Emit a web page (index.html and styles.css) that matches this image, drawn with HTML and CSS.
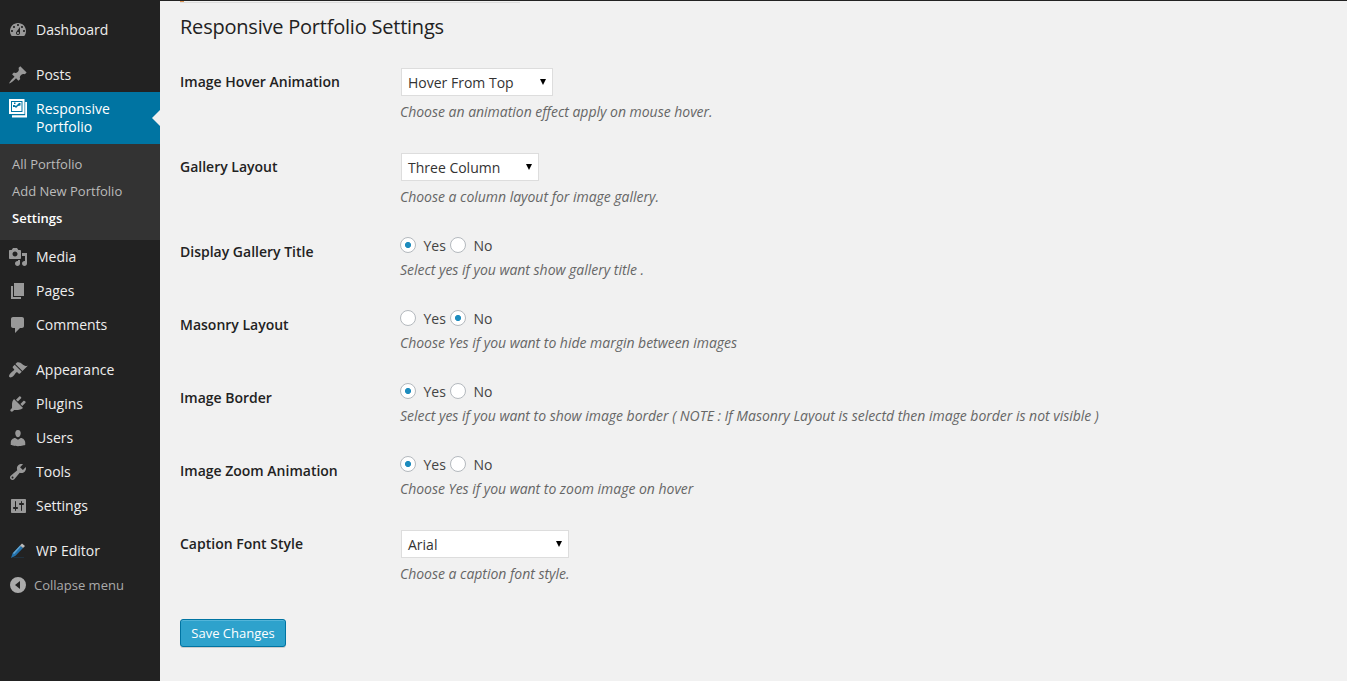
FILE: index.html
```html
<!DOCTYPE html>
<html lang="en">
<head>
<meta charset="utf-8">
<title>Responsive Portfolio Settings</title>
<link rel="stylesheet" href="styles.css">
</head>
<body>
<div class="admin">
  <nav class="menu">
    <a class="item"><svg class="icon" viewBox="0 0 20 20"><path d="M3.76 16h12.48c1.1-1.37 1.76-3.11 1.76-5 0-4.42-3.58-8-8-8s-8 3.58-8 8c0 1.89.66 3.63 1.76 5zM10 4c.55 0 1 .45 1 1s-.45 1-1 1-1-.45-1-1 .45-1 1-1zM6 6c.55 0 1 .45 1 1s-.45 1-1 1-1-.45-1-1 .45-1 1-1zm8 0c.55 0 1 .45 1 1s-.45 1-1 1-1-.45-1-1 .45-1 1-1zm-5.37 5.55L12 7v6c0 1.1-.9 2-2 2s-2-.9-2-2c0-.57.24-1.08.63-1.45zM4 10c.55 0 1 .45 1 1s-.45 1-1 1-1-.45-1-1 .45-1 1-1zm12 0c.55 0 1 .45 1 1s-.45 1-1 1-1-.45-1-1 .45-1 1-1zm-5 3c0-.55-.45-1-1-1s-1 .45-1 1 .45 1 1 1 1-.45 1-1z"/></svg><span>Dashboard</span></a>
    <a class="item spaced"><svg class="icon" viewBox="0 0 20 20"><path d="M10.44 3.02l1.82-1.82 6.36 6.35-1.83 1.82c-1.05-.68-2.48-.57-3.41.36l-.75.75c-.92.93-1.04 2.35-.35 3.41l-1.83 1.82-2.41-2.41-2.8 2.79c-.42.42-3.38 2.71-3.8 2.29s1.86-3.39 2.28-3.81l2.79-2.79L4.1 9.36l1.83-1.82c1.05.69 2.48.57 3.4-.36l.75-.75c.93-.92 1.05-2.35.36-3.41z"/></svg><span>Posts</span></a>
    <a class="item current"><svg class="icon" viewBox="0 0 20 20"><path fill-rule="evenodd" d="M1 0h15.500v15H1zM3 2v11h11.500V2z"/><path fill-rule="evenodd" d="M4 3h9.500v9H4zM6 3.500v1.500h1.500V3.500zM10 5l-2 2-1.500-1H5v2h2l1 1 2-2 2.500-.5V4H11z"/><path d="M17.200 3H19v15.500H4v-2.300h13.200z"/></svg><span>Responsive Portfolio</span></a>
    <div class="submenu">
      <a>All Portfolio</a>
      <a>Add New Portfolio</a>
      <a class="active">Settings</a>
    </div>
    <a class="item"><svg class="icon" viewBox="0 0 20 20"><path d="M13 11V4c0-.55-.45-1-1-1h-1.67L9 1H5L3.67 3H2c-.55 0-1 .45-1 1v7c0 .55.45 1 1 1h10c.55 0 1-.45 1-1zM7 4.5c1.38 0 2.5 1.12 2.5 2.5S8.38 9.5 7 9.5 4.5 8.38 4.5 7 5.62 4.5 7 4.5zM14 6h5v10.5c0 1.38-1.12 2.5-2.5 2.5S14 17.88 14 16.5s1.12-2.5 2.5-2.5c.17 0 .34.02.5.05V9h-3V6zm-4 8.05V13h2v3.5c0 1.38-1.12 2.5-2.5 2.5S7 17.88 7 16.5 8.12 14 9.5 14c.17 0 .34.02.5.05z"/></svg><span>Media</span></a>
    <a class="item"><svg class="icon" viewBox="0 0 20 20"><path d="M6 15V2h10v13H6zm-1 1h8v2H3V5h2v11z"/></svg><span>Pages</span></a>
    <a class="item"><svg class="icon" viewBox="0 0 20 20"><path d="M5 2h9c1.1 0 2 .9 2 2v7c0 1.1-.9 2-2 2h-2l-5 5v-5H5c-1.1 0-2-.9-2-2V4c0-1.1.9-2 2-2z"/></svg><span>Comments</span></a>
    <a class="item spaced"><svg class="icon" viewBox="0 0 20 20"><path d="M14.48 11.06L7.41 3.99l1.5-1.5c.5-.56 2.3-.47 3.51.32 1.21.8 1.43 1.28 2.91 2.1 1.18.64 2.45 1.26 4.45.85zm-.71.71L6.7 4.7 4.93 6.47c-.39.39-.39 1.02 0 1.41l1.06 1.06c.39.39.39 1.03 0 1.42-.6.6-1.43 1.11-2.21 1.69-.35.26-.7.53-1.01.84C1.43 14.23.4 16.08 1.4 17.07c.99 1 2.84-.03 4.18-1.36.31-.31.58-.66.85-1.02.57-.78 1.08-1.61 1.69-2.21.39-.39 1.02-.39 1.41 0l1.06 1.06c.39.39 1.02.39 1.41 0z"/></svg><span>Appearance</span></a>
    <a class="item"><svg class="icon" viewBox="0 0 20 20"><path d="M13.11 4.36L9.87 7.6 8 5.73l3.24-3.24c.35-.34 1.05-.2 1.56.32.52.51.66 1.21.31 1.55zm-8 1.77l.91-1.12 9.01 9.01-1.19.84c-.71.71-2.63 1.16-3.82 1.16H6.14L4.9 17.26c-.59.59-1.54.59-2.12 0-.59-.58-.59-1.53 0-2.12l1.24-1.24v-3.88c0-1.13.4-3.19 1.09-3.89zm7.26 3.97l3.24-3.24c.34-.35 1.04-.21 1.55.31.52.51.66 1.21.31 1.55l-3.24 3.25z"/></svg><span>Plugins</span></a>
    <a class="item"><svg class="icon" viewBox="0 0 20 20"><path d="M10 9.25c-2.27 0-2.73-3.44-2.73-3.44C7 4.02 7.82 2 9.97 2c2.16 0 2.98 2.02 2.71 3.81 0 0-.41 3.44-2.68 3.44zm0 2.57L12.72 10c2.39 0 4.52 2.33 4.52 4.53v2.49s-3.65 1.13-7.24 1.13c-3.65 0-7.24-1.13-7.24-1.13v-2.49c0-2.25 1.94-4.48 4.47-4.48z"/></svg><span>Users</span></a>
    <a class="item"><svg class="icon" viewBox="0 0 20 20"><path d="M16.68 9.77c-1.34 1.34-3.3 1.67-4.95.99l-5.41 6.52c-.99.99-2.59.99-3.58 0s-.99-2.59 0-3.57l6.52-5.42c-.68-1.65-.35-3.61.99-4.95 1.28-1.28 3.12-1.62 4.72-1.06l-2.89 2.89 2.82 2.82 2.86-2.87c.53 1.58.18 3.39-1.08 4.65zM3.81 16.21c.4.39 1.04.39 1.43 0 .4-.4.4-1.04 0-1.43-.39-.4-1.03-.4-1.43 0-.39.39-.39 1.03 0 1.43z"/></svg><span>Tools</span></a>
    <a class="item"><svg class="icon" viewBox="0 0 20 20"><path d="M18 16V4c0-.55-.45-1-1-1H4c-.55 0-1 .45-1 1v12c0 .55.45 1 1 1h13c.55 0 1-.45 1-1zM8 11h1c.55 0 1 .45 1 1s-.45 1-1 1H8v1.500c0 .28-.22.5-.5.5s-.5-.22-.5-.5V13H6c-.55 0-1-.45-1-1s.45-1 1-1h1V5.500c0-.28.22-.5.5-.5s.5.22.5.5V11zm5-2h-1c-.55 0-1-.45-1-1s.45-1 1-1h1V5.500c0-.28.22-.5.5-.5s.5.22.5.5V7h1c.55 0 1 .45 1 1s-.45 1-1 1h-1v5.500c0 .28-.22.5-.5.5s-.5-.22-.5-.5V9z"/></svg><span>Settings</span></a>
    <a class="item spaced"><svg class="icon" viewBox="0 0 20 20"><path class="pen-shade" d="M5 16h11v1H6z"/><path class="pen-body" d="M3 17l1.500-4.500L12 4.500l3 2.500-7.500 7.700z"/><path class="pen-edge" d="M5 12l7-7.500 1 .8-7 8z"/><path class="pen-cap" d="M12 4.500l2-2 3 2.500-2 2z"/></svg><span>WP Editor</span></a>
    <a class="item collapse"><svg class="icon" viewBox="0 0 20 20"><path fill-rule="evenodd" d="M10 2a8 8 0 1 1 0 16 8 8 0 0 1 0-16zM12 6l-5 4 5 4z"/></svg><span>Collapse menu</span></a>
  </nav>
  <main class="content">
    <div class="notice-edge"></div>
    <h2 class="title">Responsive Portfolio Settings</h2>
    <div class="form">
      <div class="row tall"><div class="label">Image Hover Animation</div><div class="field"><div class="select hover-select">Hover From Top<i class="arrow"></i></div><p class="desc">Choose an animation effect apply on mouse hover.</p></div></div>
      <div class="row tall"><div class="label">Gallery Layout</div><div class="field"><div class="select column-select">Three Column<i class="arrow"></i></div><p class="desc">Choose a column layout for image gallery.</p></div></div>
      <div class="row"><div class="label">Display Gallery Title</div><div class="field"><div class="radios"><i class="radio on"></i><span class="opt">Yes</span><i class="radio"></i><span class="opt">No</span></div><p class="desc">Select yes if you want show gallery title .</p></div></div>
      <div class="row"><div class="label">Masonry Layout</div><div class="field"><div class="radios"><i class="radio"></i><span class="opt">Yes</span><i class="radio on"></i><span class="opt">No</span></div><p class="desc">Choose Yes if you want to hide margin between images</p></div></div>
      <div class="row"><div class="label">Image Border</div><div class="field"><div class="radios"><i class="radio on"></i><span class="opt">Yes</span><i class="radio"></i><span class="opt">No</span></div><p class="desc">Select yes if you want to show image border ( NOTE : If Masonry Layout is selectd then image border is not visible )</p></div></div>
      <div class="row"><div class="label">Image Zoom Animation</div><div class="field"><div class="radios"><i class="radio on"></i><span class="opt">Yes</span><i class="radio"></i><span class="opt">No</span></div><p class="desc">Choose Yes if you want to zoom image on hover</p></div></div>
      <div class="row tall"><div class="label">Caption Font Style</div><div class="field"><div class="select font-select">Arial<i class="arrow"></i></div><p class="desc">Choose a caption font style.</p></div></div>
    </div>
    <button class="save" type="button">Save Changes</button>
  </main>
</div>
</body>
</html>
```
FILE: styles.css
```css
* { box-sizing: border-box; }
body { margin: 0; background: #f1f1f1; font-family: "Open Sans", sans-serif; font-size: 14px; color: #444; }
.admin { display: flex; height: 681px; overflow: hidden; }

.menu { width: 160px; flex: none; padding-top: 13px; background: #222; }
.item { display: flex; align-items: flex-start; height: 34px; padding: 7px 0 0 8px; color: #eee; line-height: 18px; }
.item span { width: 110px; margin: 1px 0 0 8px; }
.icon { width: 20px; height: 20px; flex: none; fill: #999; }
.spaced { margin-top: 11px; }
.current { position: relative; height: 52px; background: #0074a2; color: #fff; }
.current .icon { fill: #fff; }
.current::after { content: ""; position: absolute; right: 0; top: 18px; border: 8px solid transparent; border-right-color: #f1f1f1; border-left-width: 0; }
.submenu { display: flex; flex-direction: column; height: 96px; padding: 7px 12px 8px; background: #333; font-size: 13px; line-height: 27px; color: #bbb; }
.submenu .active { color: #fff; font-weight: 600; }
.collapse { color: #aaa; font-size: 13px; }
.collapse .icon { fill: #aaa; }
.collapse span { margin-left: 6px; }
.pen-shade { fill: #20303d; }
.pen-body { fill: #2272ad; }
.pen-edge { fill: #65a5d0; }
.pen-cap { fill: #bbb; }

.content { flex: 1; border-top: 1px solid #222; padding-left: 20px; }
.notice-edge { width: 340px; height: 2px; border-bottom: 1px solid #ddd; background: linear-gradient(90deg, #df9654 4px, transparent 4px); }
.title { margin: 9px 0 0; height: 40px; font-size: 20px; font-weight: 400; letter-spacing: -.22px; line-height: 29px; color: #222; }
.row { display: flex; height: 73px; }
.tall { height: 85px; }
.label { width: 220px; padding-top: 20px; line-height: 19px; font-weight: 600; color: #222; }
.field { padding-top: 15px; white-space: nowrap; }
.select { display: flex; justify-content: space-between; height: 28px; margin: 1px 1px 5px; padding: 1px 6px 0 6px; border: 1px solid #ddd; background: #fff; line-height: 26px; color: #333; }
.hover-select { width: 152px; }
.column-select { width: 138px; }
.font-select { width: 168px; }
.arrow { width: 0; height: 0; margin-top: 9px; border: 3.5px solid transparent; border-top: 6px solid #000; border-bottom: 0; }
.desc { margin: 0; line-height: 21px; font-style: italic; letter-spacing: -.02px; color: #666; }
.radios { display: flex; height: 22px; }
.radio { width: 16px; height: 16px; border: 1px solid #b4b9be; border-radius: 50%; background: #fff; }
.radio.on { background: radial-gradient(circle, #1e8cbe 2.700px, #fff 3.400px); }
.opt { width: 34px; padding-left: 7.5px; line-height: 18px; }
.save { display: block; width: 106px; height: 28px; margin-top: 20px; padding: 0; border: 1px solid #0074a2; border-radius: 3px; background: #2ea2cc; box-shadow: inset 0 1px 0 rgba(120,200,230,.5), 0 1px 0 rgba(0,0,0,.15); font-family: inherit; font-size: 13px; line-height: 26px; color: #fff; }
```
